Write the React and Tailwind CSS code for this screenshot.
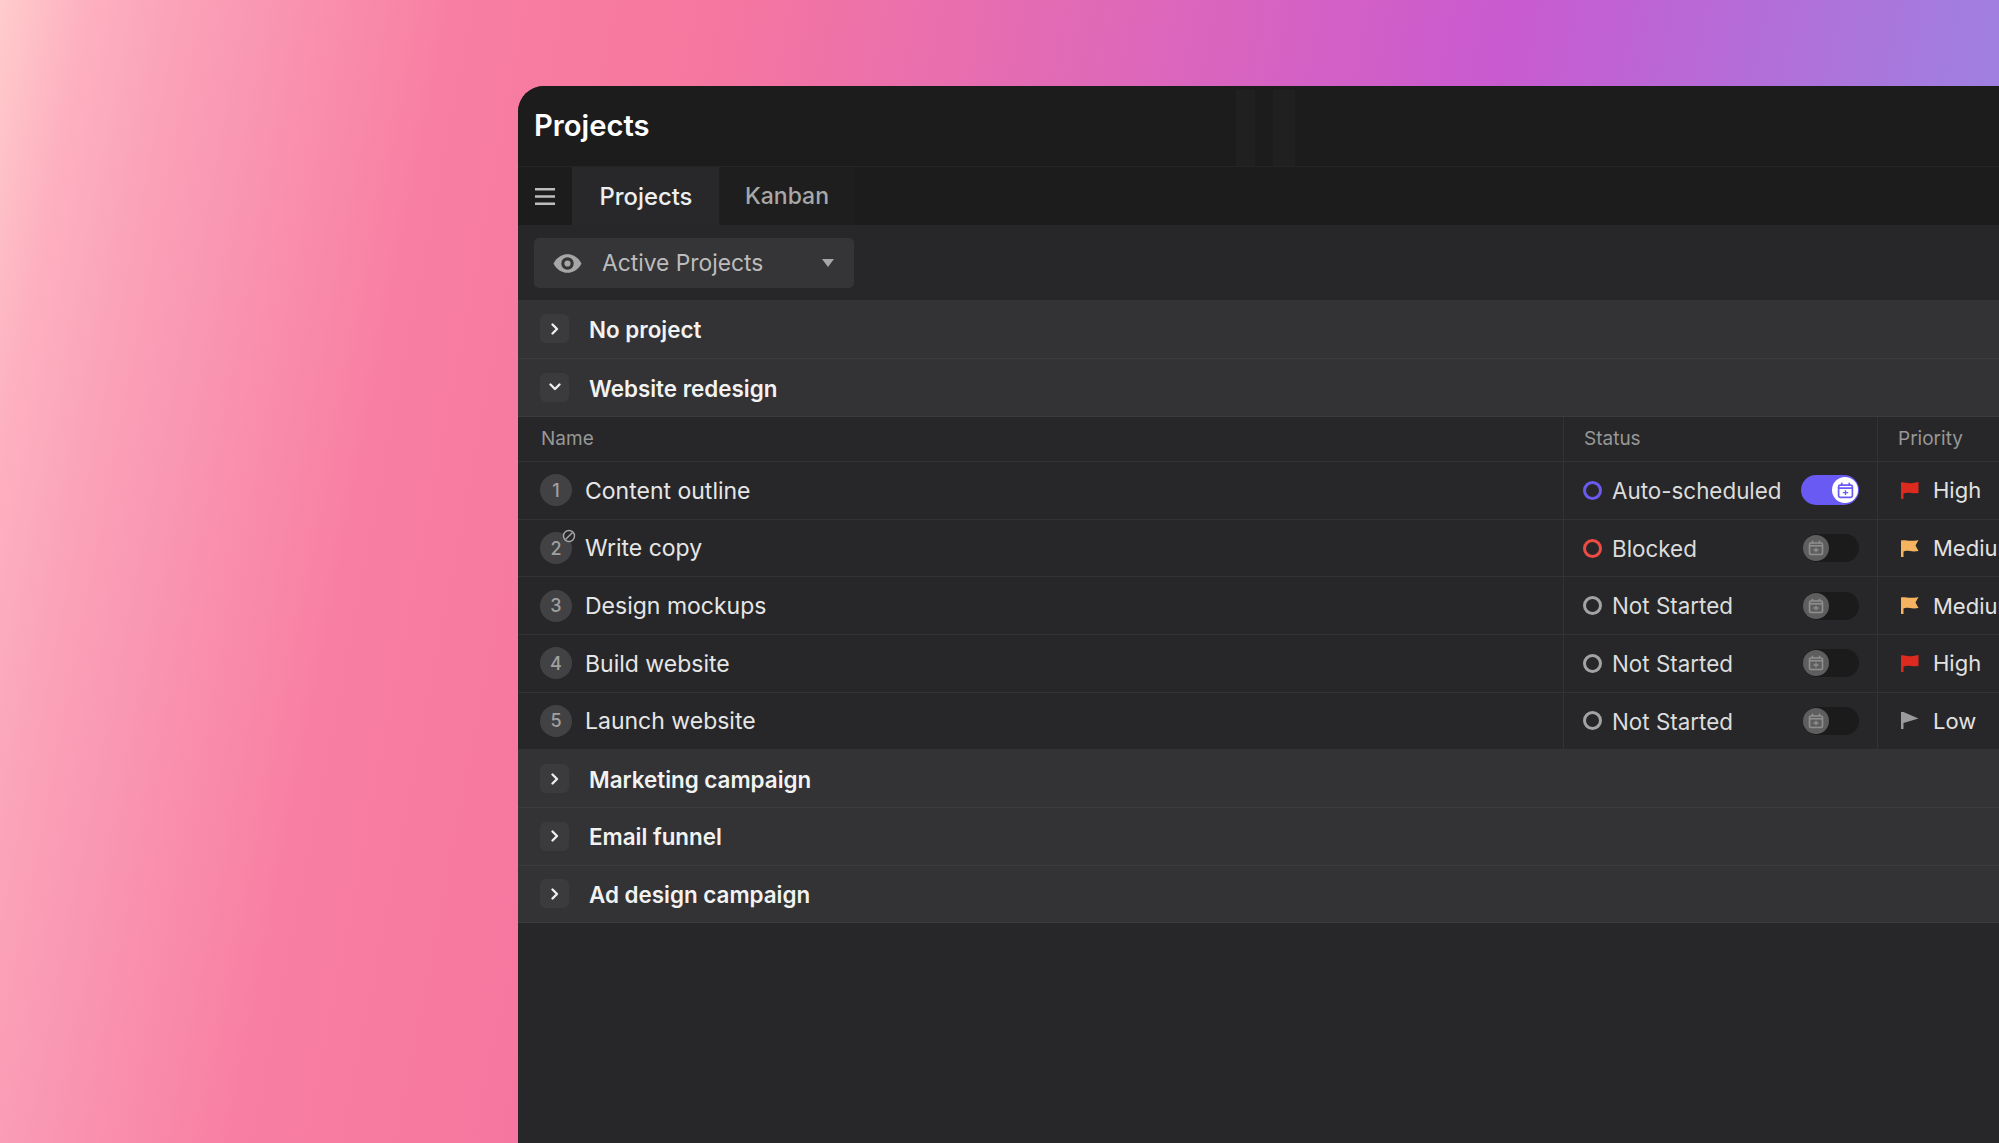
import React from "react";

const GROUPS_BOTTOM = ["Marketing campaign", "Email funnel", "Ad design campaign"];

const TASKS = [
    { n: 1, name: "Content outline", status: "Auto-scheduled", ring: "border-[#6a5af0]", on: true, flag: "text-[#dc2a1e]", priority: "High" },
    { n: 2, name: "Write copy", status: "Blocked", ring: "border-[#ee4b43]", blocked: true, flag: "text-[#f6b460]", priority: "Medium", notched: true },
    { n: 3, name: "Design mockups", status: "Not Started", ring: "border-[#a3a3a3]", flag: "text-[#f6b460]", priority: "Medium", notched: true },
    { n: 4, name: "Build website", status: "Not Started", ring: "border-[#a3a3a3]", flag: "text-[#dc2a1e]", priority: "High" },
    { n: 5, name: "Launch website", status: "Not Started", ring: "border-[#a3a3a3]", flag: "text-[#9a9a9a]", priority: "Low", low: true },
];

function Flag({ color, notched, low }) {
    let d = "M1 1.5C4 .5 7 3 13 2L18.5 1V12C12 13 8 10.5 3.5 12.5V18H1Z";
    if (notched) d = "M1 1.5C5 .5 9 3 18.5 1L15.5 6.5L18.5 12C11 13.5 7 10.5 3.5 12.5V18H1Z";
    if (low) d = "M1 1H3.5L18.5 7.5L3.5 12V18H1Z";
    return (
        <svg viewBox="0 0 19 19" className={`shrink-0 w-[19px] h-[19px] ${color}`} fill="currentColor">
            <path d={d} />
        </svg>
    );
}

function CalendarPlus({ className }) {
    return (
        <svg viewBox="0 0 16 16" className={className} fill="none" stroke="currentColor" strokeWidth="1.6">
            <rect x="1.5" y="3" width="13" height="11.5" rx="1.5" />
            <path d="M4.5 .8V3M11.5 .8V3M1.5 5.8H14.5" />
            <path d="M5.5 10H10.5M8 7.8V12.2" strokeWidth="1.3" />
        </svg>
    );
}

function Toggle({ on }) {
    if (on) {
        return (
            <div className="flex items-center justify-end w-[58px] h-[30px] rounded-full bg-[#6a5af4]">
                <div className="flex items-center justify-center w-[26px] h-[26px] mr-[1px] rounded-full bg-white">
                    <CalendarPlus className="w-[17px] h-[17px] text-[#6a5af4]" />
                </div>
            </div>
        );
    }
    return (
        <div className="flex items-center w-[56px] h-[28px] rounded-full bg-[#1b1b1c]">
            <div className="flex items-center justify-center w-[26px] h-[26px] rounded-full bg-[#5e5e5e]">
                <CalendarPlus className="w-[16px] h-[16px] text-[#8f8f8f]" />
            </div>
        </div>
    );
}

function GroupRow({ name, open, tall }) {
    return (
        <div className={`flex items-center ${tall ? "h-[58.6px]" : "h-[57.7px]"} pl-[22px] bg-[#333335] border-b border-[#3b3b3d]`}>
            <div className="flex items-center justify-center w-[29px] h-[29px] rounded-[6px] bg-[#3b3b3d]">
                <svg viewBox="0 0 16 16" className="w-[16px] h-[16px] text-[#ededed]" fill="none" stroke="currentColor" strokeWidth="2.4" strokeLinecap="round" strokeLinejoin="round">
                    <path d={open ? "M3.5 5.5L8 10L12.5 5.5" : "M5.5 3.5L10 8L5.5 12.5"} />
                </svg>
            </div>
            <span className="ml-[20px] pt-[2px] text-[22.4px] font-semibold text-[#f2f2f2]">{name}</span>
        </div>
    );
}

function TaskRow({ task }) {
    return (
        <div className="flex h-[57.6px] border-b border-[#333335]">
            <div className="flex flex-1 items-center pl-[22px]">
                <div className="relative flex items-center justify-center w-[32px] h-[32px] rounded-full bg-[#424244] text-[18px] font-medium text-[#a0a0a0]">
                    {task.n}
                    {task.blocked && (
                        <svg viewBox="0 0 14 14" className="absolute -top-[3px] -right-[4px] w-[14px] h-[14px] text-[#a8a8a8]" fill="#28282a" stroke="currentColor" strokeWidth="1.4">
                            <circle cx="7" cy="7" r="5.5" />
                            <path d="M3.5 10.5L10.5 3.5" />
                        </svg>
                    )}
                </div>
                <span className="ml-[13px] pt-[1px] text-[23px] text-[#e6e6e6]">{task.name}</span>
            </div>
            <div className="flex items-center w-[314px] pl-[19px] border-l border-[#333335]">
                <div className={`w-[19px] h-[19px] rounded-full border-[3px] ${task.ring}`}></div>
                <span className="ml-[10px] pt-[1px] flex-1 text-[22.4px] text-[#dcdcdc]">{task.status}</span>
                <div className="mr-[18px]"><Toggle on={task.on} /></div>
            </div>
            <div className="flex items-center w-[122px] pl-[22px] border-l border-[#333335] overflow-hidden whitespace-nowrap">
                <Flag color={task.flag} notched={task.notched} low={task.low} />
                <span className="ml-[14px] pt-[1px] text-[22px] text-[#e2e2e2]">{task.priority}</span>
            </div>
        </div>
    );
}

function App() {
    return (
        <div className="flex w-full h-[1143px] overflow-hidden pt-[86px] pl-[518px] font-['Inter',sans-serif] bg-[linear-gradient(101deg,#ffcccc_0%,#fdb0c0_4%,#fa9fb6_9%,#f87ea3_20.7%,#f6779f_32%,#c95ad0_68%,#a07fe0_90%,#9488e4_100%)]">
            <div className="flex flex-col w-full rounded-tl-[26px] overflow-hidden bg-[#272729]">
                <div className="flex h-[81px] pl-[16px] bg-[#1c1c1c] border-b border-[#252525]">
                    <h1 className="self-center w-[702px] text-[29.2px] font-semibold text-white">Projects</h1>
                    <div className="self-end w-[19px] h-[76px] bg-[#202020]"></div>
                    <div className="self-end w-[22px] h-[76px] ml-[18px] bg-[#202020]"></div>
                </div>

                <div className="flex h-[58px] bg-[#1c1c1c]">
                    <div className="flex items-center justify-center w-[54px] text-[#bdbdbd]">
                        <svg viewBox="0 0 22 19" className="w-[21px] h-[19px]" fill="none" stroke="currentColor" strokeWidth="2.6">
                            <path d="M0 2H21M0 9.5H21M0 17H21" />
                        </svg>
                    </div>
                    <div className="flex items-center justify-center w-[147px] pl-[1px] pt-[1px] bg-[#28282a] text-[23.8px] font-medium text-[#eeeeee]">Projects</div>
                    <div className="flex items-center justify-center w-[136px] pt-[1px] bg-[#1e1e1e] text-[23px] font-medium text-[#a8a8a8]">Kanban</div>
                </div>

                <div className="flex items-center h-[75px] pl-[16px] pt-[1px]">
                    <div className="flex items-center w-[320px] h-[50px] pl-[19px] pr-[20px] rounded-[5px] bg-[#353537]">
                        <svg viewBox="0 0 28 20" className="w-[29px] h-[21px] text-[#a6a6a6]" fill="currentColor">
                            <path fillRule="evenodd" d="M14 1C8 1 3 4.8 .5 10C3 15.2 8 19 14 19S25 15.2 27.5 10C25 4.8 20 1 14 1ZM14 16A6 6 0 1 1 14 4A6 6 0 0 1 14 16ZM14 13A3 3 0 1 0 14 7A3 3 0 0 0 14 13Z" />
                        </svg>
                        <span className="ml-[20px] flex-1 text-[22.8px] text-[#bcbcbc]">Active Projects</span>
                        <svg viewBox="0 0 12 8" className="w-[12px] h-[8px] text-[#a6a6a6]" fill="currentColor">
                            <path d="M0 0H12L6 8Z" />
                        </svg>
                    </div>
                </div>

                <GroupRow name="No project" tall />
                <GroupRow name="Website redesign" open tall />

                <div className="flex h-[45px] border-b border-[#333335] text-[19px] text-[#979797]">
                    <div className="flex flex-1 items-center pl-[23px] pt-[1px]">Name</div>
                    <div className="flex items-center w-[314px] pl-[20px] pt-[1px] border-l border-[#333335]">Status</div>
                    <div className="flex items-center w-[122px] pl-[20px] pt-[1px] border-l border-[#333335]">Priority</div>
                </div>

                {TASKS.map((t) => <TaskRow key={t.n} task={t} />)}

                {GROUPS_BOTTOM.map((g) => <GroupRow key={g} name={g} />)}
            </div>
        </div>
    );
}

export default App;
